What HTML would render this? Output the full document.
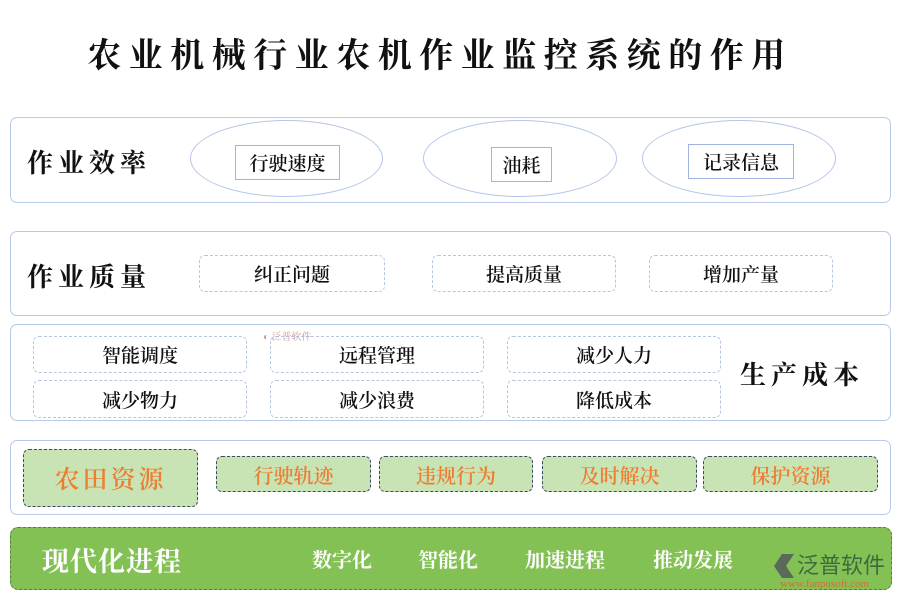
<!DOCTYPE html>
<html><head><meta charset="utf-8"><style>
body{margin:0;width:900px;height:600px;background:#fff;position:relative;overflow:hidden;font-family:"Liberation Serif","Noto Serif CJK SC",serif;color:#111}
.a{position:absolute;box-sizing:border-box}
.box{border:1.5px solid #b8c9ea;border-radius:7px}
.c{display:flex;align-items:center;justify-content:center}
.el{border:1.5px solid #b4c6e8;border-radius:50%}
.r{border:1px solid #9fb4df;background:#fff;font-size:19px;font-weight:600}
.d{border:1.2px dashed #b6c5e4;border-radius:6px;font-size:19px;font-weight:600}
.g{background:#c9e4b4;border:1.2px dashed #3a4a6a;border-radius:6px;color:#ed7d31;font-size:20px;font-weight:600}
.lab{font-size:26px;letter-spacing:5px;font-weight:700}
.w{color:#fff;font-size:20px;font-weight:700}
</style></head><body>
<div class="a" style="left:0;width:880px;top:28px;text-align:center;font-size:34px;letter-spacing:7.5px;font-weight:700">农业机械行业农机作业监控系统的作用</div>

<div class="a box" style="left:10px;top:117px;width:881px;height:86px"></div>
<div class="a lab" style="left:27px;top:143px">作业效率</div>
<div class="a el" style="left:190px;top:120px;width:193px;height:77px"></div>
<div class="a el" style="left:423px;top:120px;width:194px;height:77px"></div>
<div class="a el" style="left:642px;top:120px;width:194px;height:77px"></div>
<div class="a r c" style="left:235px;top:145px;width:105px;height:35px">行驶速度</div>
<div class="a r c" style="left:491px;top:147px;width:61px;height:35px">油耗</div>
<div class="a r c" style="left:688px;top:144px;width:106px;height:35px">记录信息</div>

<div class="a box" style="left:10px;top:231px;width:881px;height:85px"></div>
<div class="a lab" style="left:27px;top:257px">作业质量</div>
<div class="a d c" style="left:199px;top:255px;width:186px;height:37px">纠正问题</div>
<div class="a d c" style="left:432px;top:255px;width:184px;height:37px">提高质量</div>
<div class="a d c" style="left:649px;top:255px;width:184px;height:37px">增加产量</div>

<div class="a box" style="left:10px;top:324px;width:881px;height:97px"></div>
<div class="a d c" style="left:33px;top:336px;width:214px;height:37px">智能调度</div>
<div class="a d c" style="left:270px;top:336px;width:214px;height:37px">远程管理</div>
<div class="a d c" style="left:507px;top:336px;width:214px;height:37px">减少人力</div>
<div class="a d c" style="left:33px;top:380px;width:214px;height:38px">减少物力</div>
<div class="a d c" style="left:270px;top:380px;width:214px;height:38px">减少浪费</div>
<div class="a d c" style="left:507px;top:380px;width:214px;height:38px">降低成本</div>
<div class="a lab" style="left:740px;top:355px">生产成本</div>
<div class="a" style="left:263px;top:328px;font-size:10px;color:#c9a0a0">◐ 泛普软件</div>

<div class="a box" style="left:10px;top:440px;width:881px;height:75px"></div>
<div class="a g c" style="left:23px;top:449px;width:175px;height:58px;font-size:25px;letter-spacing:3px">农田资源</div>
<div class="a g c" style="left:216px;top:456px;width:155px;height:36px">行驶轨迹</div>
<div class="a g c" style="left:379px;top:456px;width:154px;height:36px">违规行为</div>
<div class="a g c" style="left:542px;top:456px;width:155px;height:36px">及时解决</div>
<div class="a g c" style="left:703px;top:456px;width:175px;height:36px">保护资源</div>

<div class="a" style="left:10px;top:527px;width:882px;height:63px;background:#84c155;border:1.2px dashed #5a7a4a;border-radius:8px"></div>
<div class="a w" style="left:42px;top:540px;font-size:27px;letter-spacing:1px">现代化进程</div>
<div class="a w" style="left:312px;top:544px">数字化</div>
<div class="a w" style="left:418px;top:544px">智能化</div>
<div class="a w" style="left:525px;top:544px">加速进程</div>
<div class="a w" style="left:653px;top:544px">推动发展</div>
<div class="a" style="left:774px;top:554px;width:20px;height:24px;background:#5a6a5a;clip-path:polygon(40% 0,100% 0,60% 50%,100% 100%,40% 100%,0 50%)"></div>
<div class="a" style="left:797px;top:553px;font-size:22px;color:#3d6a3d;font-family:'Noto Sans CJK SC',sans-serif;line-height:1">泛普软件</div>
<div class="a" style="left:780px;top:578px;font-size:11px;color:#d07030">www.fanpusoft.com</div>
</body></html>
